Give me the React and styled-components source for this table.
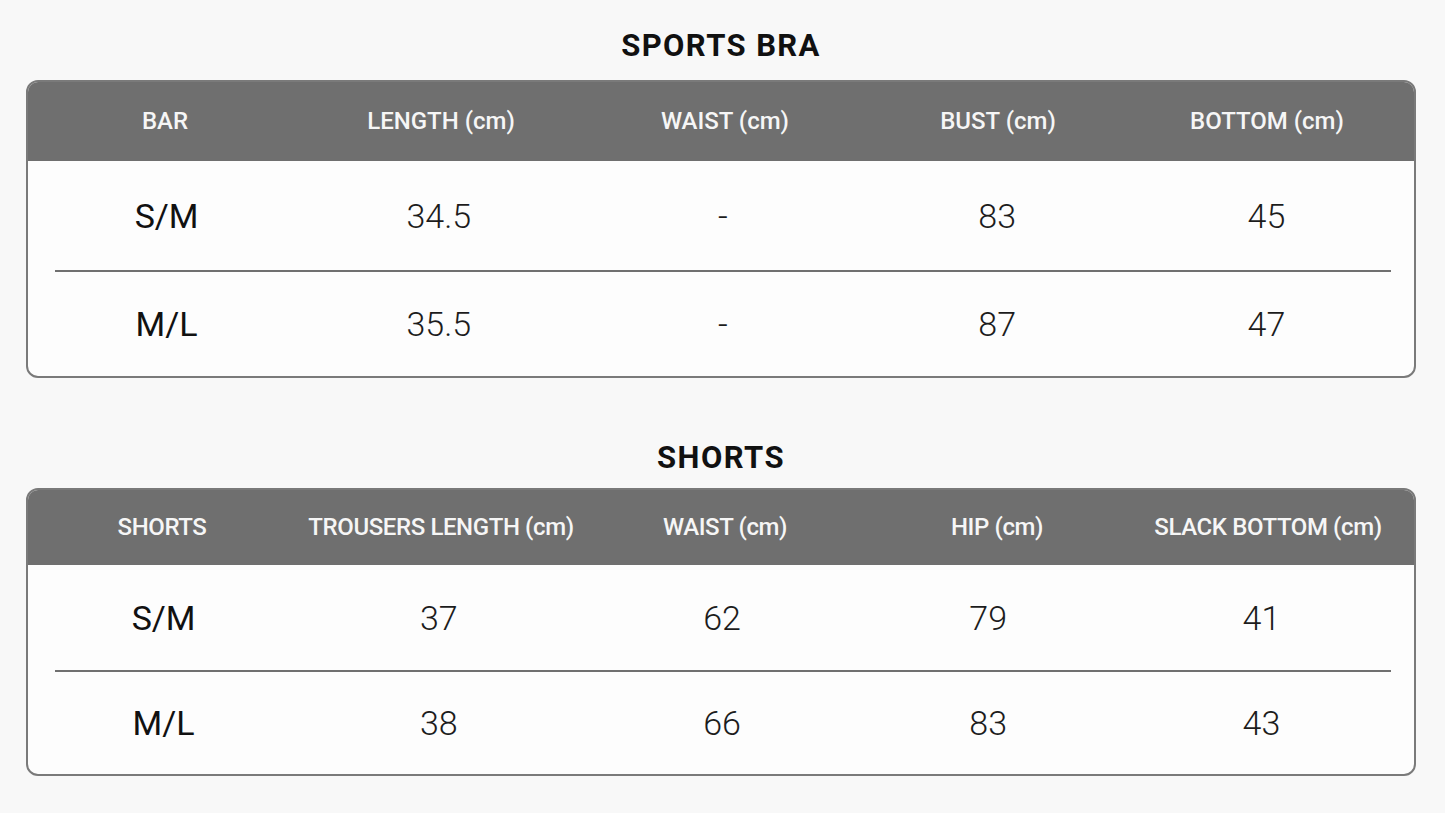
import React from "react";
import styled, { createGlobalStyle } from "styled-components";

const GlobalStyle = createGlobalStyle`
  html, body {
    margin: 0;
    padding: 0;
    background: #f8f8f8;
  }
  body {
    font-family: Roboto, "Liberation Sans", Arial, sans-serif;
    color: #1a1a1a;
  }
`;

const Page = styled.main`
  width: 1445px;
  min-height: 813px;
  box-sizing: border-box;
  padding: 28px 0 0 26px;
  display: flex;
  flex-direction: column;
`;

const Section = styled.section`
  width: 1390px;
  display: flex;
  flex-direction: column;
  margin-top: ${(p) => p.$top || 0}px;
`;

const Title = styled.h2`
  margin: 0 0 ${(p) => p.$gap}px;
  height: 36px;
  line-height: 36px;
  text-align: center;
  font-size: 31px;
  font-weight: 700;
  letter-spacing: 1.4px;
  color: #111;
`;

const Table = styled.div`
  border: 2px solid #7a7a7a;
  border-radius: 12px;
  overflow: hidden;
  background: #fdfdfd;
  display: flex;
  flex-direction: column;
`;

const columns = "278fr 274fr 294fr 252fr 292fr";

const HeaderRow = styled.div`
  display: grid;
  grid-template-columns: ${columns};
  align-items: center;
  height: ${(p) => p.$h}px;
  margin: -2px -2px 0;
  background: #6f6f6f;
`;

const HeadCell = styled.div`
  text-align: center;
  color: #f6f6f6;
  font-size: 24px;
  font-weight: 500;
  letter-spacing: ${(p) => p.$ls || 0}px;
  white-space: nowrap;
  padding-right: ${(p) => p.$shift || 0}px;
`;

const Row = styled.div`
  display: grid;
  grid-template-columns: ${columns};
  align-items: center;
  height: ${(p) => p.$h}px;
`;

const SizeCell = styled.div`
  text-align: center;
  font-size: 34px;
  font-weight: 400;
  color: #111;
  padding-right: ${(p) => p.$shift || 0}px;
`;

const ValueCell = styled.div`
  text-align: center;
  font-size: 34px;
  font-weight: 300;
  color: #1c1c1c;
  padding-right: ${(p) => p.$shift || 0}px;
`;

const Divider = styled.div`
  height: 2px;
  margin: 0 23px 0 27px;
  background: #707070;
`;

const SizeTable = ({ title, titleGap, top, headers, rows, headH, rowH, shifts, headShift, headLs, sizeShift }) => (
  <Section $top={top}>
    <Title $gap={titleGap}>{title}</Title>
    <Table>
      <HeaderRow $h={headH}>
        {headers.map((h, i) => (
          <HeadCell key={h} $shift={headShift[i]} $ls={headLs}>
            {h}
          </HeadCell>
        ))}
      </HeaderRow>
      {rows.map((r, i) => (
        <React.Fragment key={r[0]}>
          {i > 0 && <Divider />}
          <Row $h={rowH[i]}>
            <SizeCell $shift={sizeShift}>{r[0]}</SizeCell>
            {r.slice(1).map((v, j) => (
              <ValueCell key={j} $shift={shifts[j]}>
                {v}
              </ValueCell>
            ))}
          </Row>
        </React.Fragment>
      ))}
    </Table>
  </Section>
);

export default function App() {
  return (
    <>
      <GlobalStyle />
      <Page>
        <SizeTable
          title="SPORTS BRA"
          titleGap={16}
          top={0}
          headH={81}
          rowH={[109, 104]}
          shifts={[6, 4, 0, 4]}
          headShift={[0, -4, -2, -4, 6]}
          headLs={0}
          sizeShift={0}
          headers={["BAR", "LENGTH (cm)", "WAIST (cm)", "BUST (cm)", "BOTTOM (cm)"]}
          rows={[
            ["S/M", "34.5", "-", "83", "45"],
            ["M/L", "35.5", "-", "87", "47"],
          ]}
        />
        <SizeTable
          title="SHORTS"
          titleGap={12}
          top={62}
          headH={77}
          rowH={[105, 102]}
          shifts={[6, 6, 18, 14]}
          headShift={[6, -6, -2, 2, 4]}
          headLs={-0.4}
          sizeShift={6}
          headers={["SHORTS", "TROUSERS LENGTH (cm)", "WAIST (cm)", "HIP (cm)", "SLACK BOTTOM (cm)"]}
          rows={[
            ["S/M", "37", "62", "79", "41"],
            ["M/L", "38", "66", "83", "43"],
          ]}
        />
      </Page>
    </>
  );
}
